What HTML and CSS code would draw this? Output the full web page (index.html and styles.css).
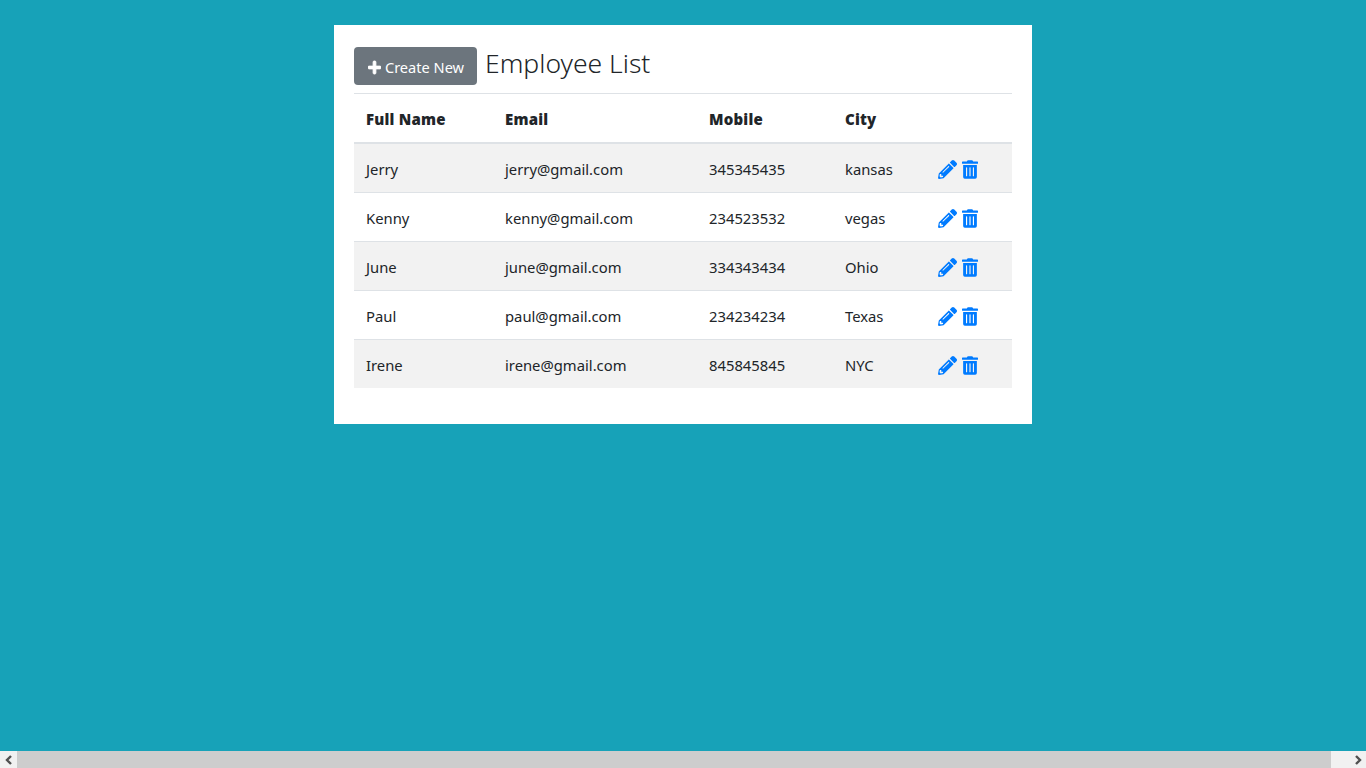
FILE: index.html
```html
<!DOCTYPE html>
<html lang="en">
<head>
  <meta charset="UTF-8">
  <title>Employee List</title>
  <link rel="stylesheet" href="styles.css">
</head>
<body>
  <svg class="defs" width="0" height="0">
    <symbol id="i-plus" viewBox="0 0 448 512"><path d="M416 208H272V64c0-17.67-14.33-32-32-32h-32c-17.67 0-32 14.33-32 32v144H32c-17.67 0-32 14.33-32 32v32c0 17.67 14.33 32 32 32h144v144c0 17.67 14.33 32 32 32h32c17.67 0 32-14.33 32-32V304h144c17.67 0 32-14.33 32-32v-32c0-17.67-14.33-32-32-32z"/></symbol>
    <symbol id="i-edit" viewBox="0 0 512 512"><path d="M497.9 142.1l-46.1 46.1c-4.7 4.7-12.3 4.7-17 0l-111-111c-4.7-4.7-4.7-12.3 0-17l46.1-46.1c18.7-18.7 49.1-18.7 67.9 0l60.1 60.1c18.8 18.7 18.8 49.1 0 67.9zM284.2 99.8L21.6 362.4.4 483.9c-2.9 16.4 11.4 30.6 27.8 27.8l121.5-21.3 262.6-262.6c4.7-4.7 4.7-12.3 0-17l-111-111c-4.8-4.7-12.4-4.7-17.1 0zM124.1 339.9c-5.5-5.5-5.5-14.3 0-19.8l154-154c5.5-5.5 14.3-5.5 19.8 0s5.5 14.3 0 19.8l-154 154c-5.5 5.5-14.3 5.5-19.8 0zM88 424h48v36.3l-64.5 11.3-31.1-31.1L51.7 376H88v48z"/></symbol>
    <symbol id="i-trash" viewBox="0 0 448 512"><path d="M32 464a48 48 0 0 0 48 48h288a48 48 0 0 0 48-48V128H32zm272-256a16 16 0 0 1 32 0v224a16 16 0 0 1-32 0zm-96 0a16 16 0 0 1 32 0v224a16 16 0 0 1-32 0zm-96 0a16 16 0 0 1 32 0v224a16 16 0 0 1-32 0zM432 32H312l-9.4-18.7A24 24 0 0 0 281.1 0H166.8a23.72 23.72 0 0 0-21.4 13.3L136 32H16A16 16 0 0 0 0 48v32a16 16 0 0 0 16 16h416a16 16 0 0 0 16-16V48a16 16 0 0 0-16-16z"/></symbol>
  </svg>

  <main class="page">
    <div class="card">
      <div class="title-row">
        <a class="btn-create" href="#">
          <svg class="icon-plus"><use href="#i-plus"/></svg>
          Create New
        </a>
        <h2 class="title">Employee List</h2>
      </div>
      <hr class="rule">
      <table class="list">
        <thead>
          <tr><th>Full Name</th><th>Email</th><th>Mobile</th><th>City</th><th></th></tr>
        </thead>
        <tbody>
          <tr>
            <td>Jerry</td><td>jerry@gmail.com</td><td>345345435</td><td>kansas</td>
            <td><div class="actions"><svg class="icon-edit"><use href="#i-edit"/></svg><svg class="icon-trash"><use href="#i-trash"/></svg></div></td>
          </tr>
          <tr>
            <td>Kenny</td><td>kenny@gmail.com</td><td>234523532</td><td>vegas</td>
            <td><div class="actions"><svg class="icon-edit"><use href="#i-edit"/></svg><svg class="icon-trash"><use href="#i-trash"/></svg></div></td>
          </tr>
          <tr>
            <td>June</td><td>june@gmail.com</td><td>334343434</td><td>Ohio</td>
            <td><div class="actions"><svg class="icon-edit"><use href="#i-edit"/></svg><svg class="icon-trash"><use href="#i-trash"/></svg></div></td>
          </tr>
          <tr>
            <td>Paul</td><td>paul@gmail.com</td><td>234234234</td><td>Texas</td>
            <td><div class="actions"><svg class="icon-edit"><use href="#i-edit"/></svg><svg class="icon-trash"><use href="#i-trash"/></svg></div></td>
          </tr>
          <tr>
            <td>Irene</td><td>irene@gmail.com</td><td>845845845</td><td>NYC</td>
            <td><div class="actions"><svg class="icon-edit"><use href="#i-edit"/></svg><svg class="icon-trash"><use href="#i-trash"/></svg></div></td>
          </tr>
        </tbody>
      </table>
    </div>
  </main>

  <div class="scrollbar">
    <div class="arrow"><svg width="8" height="10" viewBox="0 0 8 10"><path d="M6 1L2 5l4 4" fill="none" stroke="#505050" stroke-width="2.4"/></svg></div>
    <div class="thumb"></div>
    <div class="arrow"><svg width="8" height="10" viewBox="0 0 8 10"><path d="M2 1l4 4-4 4" fill="none" stroke="#505050" stroke-width="2.4"/></svg></div>
  </div>
</body>
</html>
```

FILE: styles.css
```css
html, body {
  height: 100%;
}
body {
  margin: 0;
  display: flex;
  flex-direction: column;
  height: 100vh;
  overflow: hidden;
  background: #17a2b8;
  color: #212529;
  font-family: "Noto Sans", "Open Sans", sans-serif;
  font-size: 14.8px;
  line-height: 24px;
}
.defs { display: none; }

.page {
  flex: 1;
  display: flex;
  justify-content: center;
  align-items: flex-start;
}
.card {
  width: 658px;
  margin-top: 25px;
  padding: 22px 20px 36px;
  background: #fff;
}

.title-row {
  display: flex;
  align-items: flex-start;
  gap: 8px;
}
.btn-create {
  display: flex;
  align-items: center;
  justify-content: center;
  gap: 4px;
  box-sizing: border-box;
  width: 123px;
  height: 38px;
  padding-top: 2px;
  padding-left: 1px;
  background: #6c757d;
  border-radius: 4px;
  color: #fff;
  font-size: 14.6px;
  text-decoration: none;
}
.icon-plus {
  width: 13px;
  height: 15px;
  fill: #fff;
  stroke: #fff;
  stroke-width: 30px;
}
.title {
  margin: 0;
  font-size: 26.5px;
  font-weight: 300;
  line-height: 33px;
}
.rule {
  margin: 8px 0 0;
  border: 0;
  border-top: 1px solid #dee2e6;
}

.list {
  width: 100%;
  border-collapse: collapse;
  table-layout: fixed;
}
.list th, .list td {
  padding: 13px 12px 11px;
  text-align: left;
}
.list th {
  height: 24px;
  border-bottom: 2px solid #dee2e6;
  font-size: 15px;
  font-weight: 900;
  letter-spacing: .2px;
}
.list td {
  height: 24px;
  border-top: 1px solid #dee2e6;
}
.list thead + tbody tr:first-child td { border-top: 0; }
.list tbody tr:nth-child(odd) { background: #f2f2f2; }

.list th:nth-child(1) { width: 115px; }
.list th:nth-child(2) { width: 180px; }
.list th:nth-child(3) { width: 112px; }
.list th:nth-child(4) { width: 69px; }

.actions {
  display: flex;
  align-items: center;
  gap: 5px;
}
.icon-edit {
  width: 19px;
  height: 19px;
  fill: #007bff;
}
.icon-trash {
  width: 16px;
  height: 19px;
  fill: #007bff;
}

.scrollbar {
  flex: none;
  display: flex;
  height: 17px;
  background: #f1f1f1;
}
.arrow {
  display: flex;
  align-items: center;
  justify-content: center;
  width: 17px;
}
.thumb {
  flex: 1;
  margin-right: 18px;
  background: #cdcdcd;
}
.arrow:last-child { margin-left: -18px; width: 35px; justify-content: flex-end; padding-right: 4px; box-sizing: border-box; }
```
